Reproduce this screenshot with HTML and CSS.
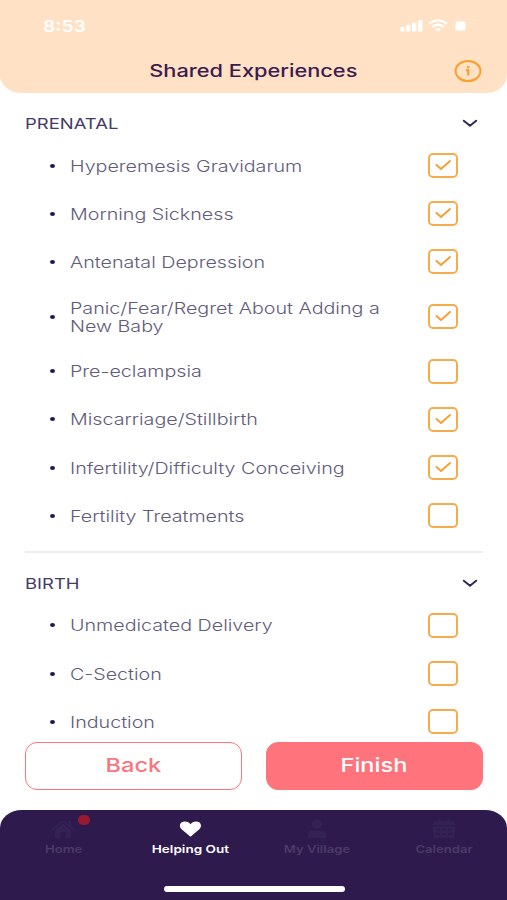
FILE: index.html
```html
<!DOCTYPE html>
<html lang="en">
<head>
    <meta charset="UTF-8">
    <meta name="viewport" content="width=device-width, initial-scale=1.0">
    <title>Shared Experiences</title>
    <link rel="stylesheet" href="styles.css">
</head>
<body>
    <header class="header">
        <div class="status">
            <span class="time wide">8:53</span>
            <svg class="status-icons" width="90" height="16" viewBox="0 0 90 16">
                <g fill="#fff">
                    <rect x="1" y="9" width="4.500" height="4.500" rx="1"/>
                    <rect x="7" y="7" width="4.500" height="6.500" rx="1"/>
                    <rect x="13" y="4.500" width="4.500" height="9" rx="1"/>
                    <rect x="19" y="2" width="4.500" height="11.500" rx="1"/>
                    <rect x="56.500" y="3.500" width="10" height="9" rx="1.500"/>
                </g>
                <g fill="none" stroke="#fff" stroke-width="2.300">
                    <path d="M30 5.600Q39 -.800 48 5.600"/>
                    <path d="M33.300 8.900Q39 4.700 44.700 8.900"/>
                </g>
                <path d="M36 10.900Q39 9 42 10.900L39 13.500Z" fill="#fff"/>
                <rect x="54.500" y="1.500" width="27" height="12.500" rx="3" fill="none" stroke="#fff" stroke-opacity=".12"/>
            </svg>
        </div>
        <div class="title-bar">
            <h1 class="title wide">Shared Experiences</h1>
            <svg class="info" width="28" height="24" viewBox="0 0 28 24">
                <ellipse cx="14" cy="12" rx="12.400" ry="10.100" fill="none" stroke="#f9a02f" stroke-width="2"/>
                <rect x="12.700" y="7" width="3" height="2" rx="1" fill="#f9a02f"/>
                <path d="M12 11.200h2.300v5.300" fill="none" stroke="#f9a02f" stroke-width="2.200"/>
            </svg>
        </div>
    </header>

    <main class="content">
        <section class="group">
            <div class="group-head">
                <h2 class="group-name wide">PRENATAL</h2>
                <svg class="chevron" width="16" height="10" viewBox="0 0 16 10"><path d="M1.800 2.700L8 7.700L14.200 2.700"/></svg>
            </div>
            <ul class="list">
                <li class="item"><span class="label wide">Hyperemesis Gravidarum</span><span class="box"><svg viewBox="0 0 26 21"><path d="M6.500 10L11 14L20 6"/></svg></span></li>
                <li class="item"><span class="label wide">Morning Sickness</span><span class="box"><svg viewBox="0 0 26 21"><path d="M6.500 10L11 14L20 6"/></svg></span></li>
                <li class="item"><span class="label wide">Antenatal Depression</span><span class="box"><svg viewBox="0 0 26 21"><path d="M6.500 10L11 14L20 6"/></svg></span></li>
                <li class="item tall"><span class="label wide">Panic/Fear/Regret About Adding a<br>New Baby</span><span class="box"><svg viewBox="0 0 26 21"><path d="M6.500 10L11 14L20 6"/></svg></span></li>
                <li class="item"><span class="label wide">Pre-eclampsia</span><span class="box"></span></li>
                <li class="item"><span class="label wide">Miscarriage/Stillbirth</span><span class="box"><svg viewBox="0 0 26 21"><path d="M6.500 10L11 14L20 6"/></svg></span></li>
                <li class="item"><span class="label wide">Infertility/Difficulty Conceiving</span><span class="box"><svg viewBox="0 0 26 21"><path d="M6.500 10L11 14L20 6"/></svg></span></li>
                <li class="item"><span class="label wide">Fertility Treatments</span><span class="box"></span></li>
            </ul>
        </section>
        <section class="group">
            <div class="group-head">
                <h2 class="group-name wide">BIRTH</h2>
                <svg class="chevron" width="16" height="10" viewBox="0 0 16 10"><path d="M1.800 2.700L8 7.700L14.200 2.700"/></svg>
            </div>
            <ul class="list">
                <li class="item"><span class="label wide">Unmedicated Delivery</span><span class="box"></span></li>
                <li class="item"><span class="label wide">C-Section</span><span class="box"></span></li>
                <li class="item"><span class="label wide">Induction</span><span class="box"></span></li>
            </ul>
        </section>
    </main>

    <div class="actions">
        <button class="btn btn-back"><span class="wide">Back</span></button>
        <button class="btn btn-finish"><span class="wide">Finish</span></button>
    </div>

    <footer class="footer">
        <nav class="tabs">
            <a class="tab">
                <svg width="26" height="20" viewBox="0 0 26 20">
                    <path d="M2 11L13 2L24 11" fill="none" stroke="currentColor" stroke-width="2"/>
                    <path d="M5 11L13 4.500L21 11V19H15.500V13H10.500V19H5Z" fill="currentColor"/>
                    <path d="M18.500 2H21.500V7L18.500 5Z" fill="currentColor"/>
                </svg>
                <span class="tab-name wide">Home</span>
                <i class="dot"></i>
            </a>
            <a class="tab active">
                <svg width="26" height="20" viewBox="0 0 26 20">
                    <path d="M13.500 17.800L4.600 10.200C1.200 7.200 3.200 2.600 7.800 2.600C10.500 2.600 12.500 4 13.500 5.200C14.500 4 16.500 2.600 19.200 2.600C23.800 2.600 25.700 7.200 22.300 10.200Z" fill="currentColor"/>
                </svg>
                <span class="tab-name wide">Helping Out</span>
            </a>
            <a class="tab">
                <svg width="26" height="20" viewBox="0 0 26 20">
                    <ellipse cx="13" cy="5" rx="5.500" ry="4.500" fill="currentColor"/>
                    <path d="M4 19V16Q4 11.500 9 11.500H17Q22 11.500 22 16V19Z" fill="currentColor"/>
                </svg>
                <span class="tab-name wide">My Village</span>
            </a>
            <a class="tab">
                <svg width="26" height="20" viewBox="0 0 26 20">
                    <path d="M2 6V4Q2 2.500 4 2.500H7V.500H9.500V2.500H16.500V.500H19V2.500H22Q24 2.500 24 4V6Z" fill="currentColor"/>
                    <path d="M2 7.200H24V17.500Q24 19 22 19H4Q2 19 2 17.500Z" fill="currentColor"/>
                    <path d="M5 10.500H21M5 15H21" stroke="#2e1a4d" stroke-width="2" stroke-dasharray="4 2"/>
                </svg>
                <span class="tab-name wide">Calendar</span>
            </a>
        </nav>
        <div class="home-bar"></div>
    </footer>
</body>
</html>
```
FILE: styles.css
```css
* { box-sizing: border-box; }
body { margin: 0; height: 900px; display: flex; flex-direction: column; overflow: hidden; background: #fff; color: #352a5c; font-family: Inter, "Liberation Sans", sans-serif; }
h1, h2, ul { margin: 0; padding: 0; }

/* Wide lettering */
.wide { display: inline-block; white-space: nowrap; transform: scaleX(1.24); }

/* Header */
.header { height: 93px; flex: none; background: #ffe1c5; border-radius: 0 0 21px 21px / 0 0 18px 18px; }
.status { height: 50px; padding: 2px 18px 0 43px; display: flex; justify-content: space-between; align-items: center; color: #fff; }
.time { font-size: 16px; font-weight: 600; transform: scaleX(1.2); transform-origin: left; }
.title-bar { display: grid; grid-template-columns: 1fr auto 1fr; align-items: center; padding: 0 25px; height: 42px; }
.title { grid-column: 2; font-size: 17px; font-weight: 500; color: #3d1b4e; transform: scaleX(1.28); }
.info { justify-self: end; }

/* Experience lists */
.content { flex: 1; min-height: 0; overflow: hidden; padding: 12px 24px 0 25px; }
.group + .group { border-top: 2px solid #eeeef0; margin-top: 11px; padding-top: 12px; }
.group-head { height: 36.500px; display: flex; justify-content: space-between; align-items: center; padding-right: 5px; }
.group-name { font-size: 15px; font-weight: 400; color: #453b68; transform: scaleX(1.23); transform-origin: left; }
.chevron path { fill: none; stroke: #2f2754; stroke-width: 2; stroke-linecap: round; stroke-linejoin: round; }
.list { list-style: none; }
.item { height: 48.200px; display: flex; align-items: center; padding: 0 25px; }
.item::before { content: ""; width: 5px; height: 4px; border-radius: 50%; background: #201650; margin-right: 14.500px; }
.item.tall { height: 61px; }
.label { font-size: 16px; line-height: 18px; font-weight: 300; color: #625b7a; transform: scaleX(1.23); transform-origin: left; }
.box { width: 30px; height: 25px; margin-left: auto; border: 2px solid #f8ab4b; border-radius: 5px; }
.box svg { display: block; width: 26px; height: 21px; }
.box path { fill: none; stroke: #f5a138; stroke-width: 2; stroke-linecap: round; stroke-linejoin: round; }

/* Buttons */
.actions { flex: none; height: 68px; display: grid; grid-template-columns: 1fr 1fr; gap: 24px; align-items: start; padding: 0 24.500px 0 25px; }
.btn { height: 48px; border: 1.500px solid #ff737c; border-radius: 12px; font-family: inherit; font-size: 19px; font-weight: 500; padding: 0; }
.btn-back { background: #fff; color: #f9767e; }
.btn-finish { background: #ff737c; color: #fff; }

/* Bottom navigation */
.footer { flex: none; height: 90.500px; background: #2e1a4d; border-radius: 22px 22px 0 0 / 18px 18px 0 0; display: flex; flex-direction: column; align-items: center; justify-content: space-between; padding: 9.500px 0 8px; }
.tabs { width: 100%; display: grid; grid-template-columns: repeat(4, 1fr); }
.tab { position: relative; display: flex; flex-direction: column; align-items: center; gap: 3px; color: #352254; }
.tab-name { font-size: 11px; line-height: 14px; font-weight: 600; color: #4b3b67; transform: scaleX(1.19); }
.tab.active, .active .tab-name { color: #fff; }
.active .tab-name { transform: scaleX(1.23); }
.dot { position: absolute; left: 77.500px; top: -4.500px; width: 12px; height: 10px; border-radius: 5px; background: #981a30; }
.home-bar { width: 181px; height: 6px; margin-left: 1px; border-radius: 3px; background: #fff; }
```
